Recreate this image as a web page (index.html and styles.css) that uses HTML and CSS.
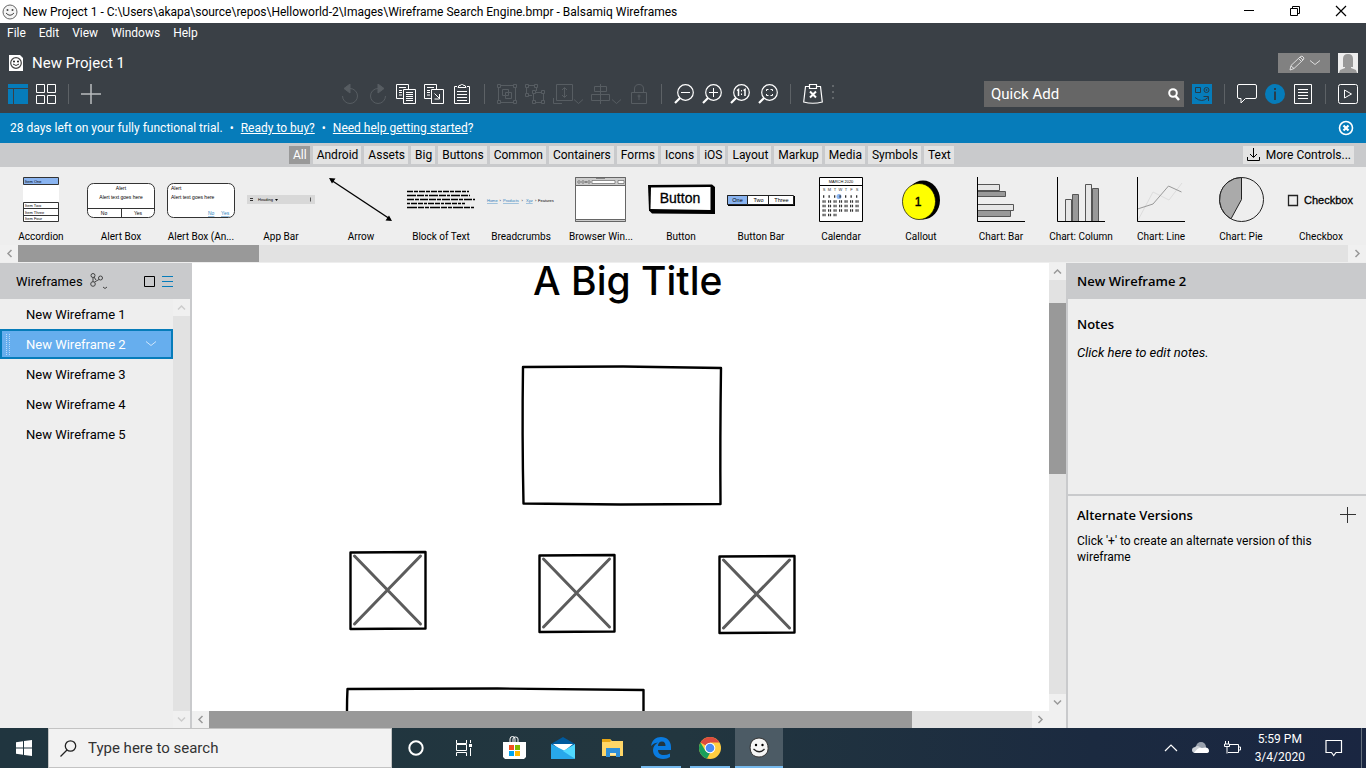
FILE: index.html
```
<!DOCTYPE html>
<html lang="en">
<head>
<meta charset="utf-8">
<title>New Project 1 - Balsamiq Wireframes</title>
<link rel="stylesheet" href="styles.css">
</head>
<body>
<svg class="defs" aria-hidden="true">
  <symbol id="mag" viewBox="0 0 20 20"><circle cx="11.500" cy="8.500" r="7.800" fill="none" stroke="currentColor" stroke-width="1.200"/><path d="M6 14L1 19" stroke="currentColor" stroke-width="2.200"/></symbol>
  <symbol id="up" viewBox="0 0 17 17"><path d="M5 10.500L8.500 7L12 10.500" fill="none" stroke="currentColor" stroke-width="1.500"/></symbol>
</svg>
<div class="app">
  <div class="titlebar">
    <svg class="app-icon" width="16" height="16" viewBox="0 0 16 16"><circle cx="8" cy="8" r="7" fill="#f4f4f4" stroke="#666"/><circle cx="5.500" cy="6" r="1" fill="#444"/><circle cx="10.500" cy="6" r="1" fill="#444"/><path d="M4 9q4 4.500 8 0" fill="none" stroke="#444"/></svg>
    <span class="window-title">New Project 1 - C:\Users\akapa\source\repos\Helloworld-2\Images\Wireframe Search Engine.bmpr - Balsamiq Wireframes</span>
    <div class="window-buttons">
      <button aria-label="Minimize"><svg width="12" height="12"><path d="M1 5.500h10" stroke="#000"/></svg></button>
      <button aria-label="Restore"><svg width="12" height="12" fill="none" stroke="#000"><path d="M1.500 3.500h7v7h-7zM3.500 3.500v-2h7v7h-2"/></svg></button>
      <button aria-label="Close"><svg width="12" height="12"><path d="M1 1l10 10M11 1L1 11" stroke="#000" stroke-width="1.200"/></svg></button>
    </div>
  </div>

  <header class="header">
    <nav class="menu">
      <button>File</button><button>Edit</button><button>View</button><button>Windows</button><button>Help</button>
    </nav>
    <div class="project">
      <svg width="15" height="16" viewBox="0 0 15 16"><path d="M0 0h11l3 3v13H0z" fill="#fff"/><circle cx="7" cy="8" r="5.300" fill="#fff" stroke="#444" stroke-width="1.200"/><circle cx="5" cy="6.500" r=".9"/><circle cx="9" cy="6.500" r=".9"/><path d="M4 9q3 3 6 0" fill="none" stroke="#333"/></svg>
      <span class="project-name">New Project 1</span>
      <button class="edit-mode" aria-label="Edit mode"><svg width="34" height="20" viewBox="0 0 34 20" fill="none" stroke="#ddd"><path d="M3 17l1-4.500L13 4l3 3-9 8.500zM11.500 5.500l3 3M4 13l3 2.500M13 4l2-1 2 2-1 2"/><path d="M23 7.500l5 4 5-4"/></svg></button>
      <svg class="avatar" width="20" height="20" viewBox="0 0 20 20"><path fill="#eee" d="M0 0h20v20H0z"/><path d="M5 14V6q0-5 5-5t5 5v8H13v1l5 2 1 3H1l1-3 5-2v-1z" fill="#999"/></svg>
    </div>
    <div class="toolbar">
      <div class="views">
        <button aria-label="Wireframe view"><svg width="20" height="20"><path fill="#067cba" d="M0 0h20v4H0zM0 5h5v15H0zM6 5h14v15H6z"/></svg></button>
        <button aria-label="Grid view"><svg width="20" height="20" fill="none" stroke="#fff"><path d="M.5.500h8v8h-8zM11.500.500h8v8h-8zM.5 11.500h8v8h-8zM11.500 11.500h8v8h-8z"/></svg></button>
        <i class="sep"></i>
        <button aria-label="Add wireframe"><svg width="20" height="20"><path d="M10 0v20M0 10h20" stroke="#b9bcbe" stroke-width="1.500"/></svg></button>
      </div>
      <div class="tools">
        <button class="off" aria-label="Undo"><svg width="20" height="20" viewBox="0 0 20 20" fill="none" stroke="currentColor"><path d="M10 4.500a7.500 7.500 0 1 1-7.500 7.500" /><path d="M10 0v9L4 4.500z" fill="currentColor"/></svg></button>
        <button class="off" aria-label="Redo"><svg width="20" height="20" viewBox="0 0 20 20" fill="none" stroke="currentColor"><path d="M10 4.500a7.500 7.500 0 1 0 7.500 7.500"/><path d="M10 0v9l6-4.500z" fill="currentColor"/></svg></button>
        <button aria-label="Copy"><svg width="20" height="20" viewBox="0 0 20 20" fill="none" stroke="currentColor"><path d="M7 14.500H.5V.500h12v5M7.500 5.500h12v14h-12zM3 3.500h7M3 6.500h3M3 8.500h3M3 11h3M10 8.500h7M10 10.500h7M10 12.500h7M10 14.500h7M10 16.500h7"/></svg></button>
        <button aria-label="Duplicate"><svg width="20" height="20" viewBox="0 0 20 20" fill="none" stroke="currentColor"><path d="M7 14.500H.5V.500h12v5M7.500 5.500h12v14h-12zM3 3.500h7M3 6.500h3M3 8.500h3M3 11h3M10.500 9.500l5 5M15.500 10v5h-5"/></svg></button>
        <button aria-label="Paste"><svg width="20" height="20" viewBox="0 0 20 20" fill="none" stroke="currentColor"><path d="M5 2.500H2.500v17h15v-17H15M6 3.500l1-2h1.500L9.500 0h1l1 1.500H13l1 2zM5 7.500h10M5 10.500h10M5 13.500h10M5 16.500h10"/></svg></button>
        <i class="sep"></i>
        <button class="off" aria-label="Group"><svg width="20" height="20" viewBox="0 0 20 20" fill="none" stroke="currentColor"><path d="M3 1.500h14M3 18.500h14M1.500 3v14M18.500 3v14M.5.500h3v3h-3zM16.500.500h3v3h-3zM.5 16.500h3v3h-3zM16.500 16.500h3v3h-3zM5.500 5.500h6v3h3v6h-6v-3h-3zM8.500 8.500h3v3h-3z"/></svg></button>
        <button class="off" aria-label="Ungroup"><svg width="20" height="20" viewBox="0 0 20 20" fill="none" stroke="currentColor"><path d="M3 1.500h7M1.500 3v7M11.500 3v4M3 11.500h4M.5.500h3v3h-3zM9.500.500h3v3h-3zM.5 9.500h3v3h-3zM7.500 6.500h3v3h-3zM16.500 6.500h3v3h-3zM7.500 16.500h3v3h-3zM16.500 16.500h3v3h-3zM10.500 8.500h6M8.500 10v6M18.500 10v6M11 18.500h5"/></svg></button>
        <button class="off" aria-label="Layering"><svg width="30" height="20" viewBox="0 0 30 20" fill="none" stroke="currentColor"><path d="M3.500.500h16v16h-16zM.5 14v5.500H9M11.500 4v9M9 6l2.500-2.500L14 6M9 11l2.500 2.500L14 11M21 15.500l4.500 4 4.500-4"/></svg></button>
        <button class="off" aria-label="Align"><svg width="30" height="20" viewBox="0 0 30 20" fill="none" stroke="currentColor"><path d="M9.500 0v20M3.500 2.500h12v5h-12zM.5 10.500h18v6H.5zM21 15.500l4.500 4 4.500-4"/></svg></button>
        <button class="off" aria-label="Lock"><svg width="20" height="20" viewBox="0 0 20 20" fill="none" stroke="currentColor"><path d="M2.500 8.500h15v11h-15zM5.500 8V5q0-4.500 4.500-4.500T14.500 5v3M10 12v4"/><circle cx="10" cy="12" r="1"/></svg></button>
        <i class="sep"></i>
        <button aria-label="Zoom out"><svg width="20" height="20"><use href="#mag"/><path d="M7 8.500h9" stroke="#fff"/></svg></button>
        <button aria-label="Zoom in"><svg width="20" height="20"><use href="#mag"/><path d="M7 8.500h9M11.500 4v9" stroke="#fff"/></svg></button>
        <button aria-label="Actual size"><svg width="20" height="20"><use href="#mag"/><path d="M7 6.500l1.500-1V12M13.500 6.500l1.500-1V12" fill="none" stroke="#fff" stroke-width="1.500"/><path d="M11 6h1v1.500h-1zM11 9.500h1V11h-1z" fill="#fff"/></svg></button>
        <button aria-label="Zoom to fit"><svg width="20" height="20"><use href="#mag"/><path d="M8.500 7V5.500h2M12.500 5.500h2V7M14.500 10v1.500h-2M10.500 11.500h-2V10" fill="none" stroke="#fff"/></svg></button>
        <i class="sep"></i>
        <button aria-label="Delete"><svg width="20" height="20" viewBox="0 0 20 20" fill="none" stroke="currentColor" stroke-width="1.200"><path d="M6 2.500H2.500L.7 18q9 2.500 18.600 0L17.500 2.500H14M6.500.500h7v4h-7z"/><path d="M7 7.500l6 6M13 7.500l-6 6" stroke-width="2"/></svg></button>
        <svg class="dots" width="4" height="20" fill="#62676b"><path d="M1 1h2v2H1zM1 7h2v2H1zM1 13h2v2H1z"/></svg>
      </div>
      <div class="actions">
        <label class="quick"><input type="text" placeholder="Quick Add" aria-label="Quick Add"><svg width="12" height="13" fill="none" stroke="#fff"><circle cx="5" cy="5" r="3.800" stroke-width="2"/><path d="M7.500 8l3.500 4" stroke-width="2.500"/></svg></label>
        <button aria-label="UI library"><svg width="20" height="20" fill="none" stroke="#263b49"><path d="M0 0h20v20H0z" fill="#067cba" stroke="none"/><path d="M3.500 3.500h5v5h-5zM3 13.500q7 6 13 0M11.500 12.500h5V17"/><circle cx="14.500" cy="6" r="2.500"/><circle cx="14.500" cy="6" r=".5"/></svg></button>
        <i class="sep"></i>
        <button aria-label="Comments"><svg width="20" height="20" fill="none" stroke="#fff"><path d="M2 .5h16q1.500 0 1.500 1.500v11q0 1.500-1.500 1.500H8.500L4 19v-4.500H2Q.5 14.500.5 13V2Q.5.500 2 .5z"/></svg></button>
        <button aria-label="Info"><svg width="20" height="20"><circle cx="10" cy="10" r="10" fill="#067cba"/><path d="M9 4h2v2H9zM9 7.500h2V16H9z" fill="#293d4c"/></svg></button>
        <button aria-label="Notes"><svg width="20" height="20" fill="none" stroke="#fff"><path d="M1.500.500h17v19h-17zM5 5.500h10M5 8.500h10M5 11.500h10M5 14.500h10"/></svg></button>
        <i class="sep"></i>
        <button aria-label="Present"><svg width="20" height="20" fill="none" stroke="#fff"><rect x=".5" y=".5" width="19" height="19" rx="2"/><path d="M6.500 6v8l7-4z"/></svg></button>
      </div>
    </div>
  </header>

  <div class="banner">
    <span>28 days left on your fully functional trial.</span><span>•</span><a href="#buy">Ready to buy?</a><span>•</span><span><a href="#help">Need help getting started</a>?</span>
    <button aria-label="Dismiss"><svg width="16" height="16" fill="none" stroke="#fff"><circle cx="8" cy="8" r="6.500" stroke-width="1.600"/><path d="M5.500 5.500l5 5M10.500 5.500l-5 5" stroke-width="2.200"/></svg></button>
  </div>

  <div class="filters">
    <div class="tags">
      <button class="on">All</button><button>Android</button><button>Assets</button><button>Big</button><button>Buttons</button><button>Common</button><button>Containers</button><button>Forms</button><button>Icons</button><button>iOS</button><button>Layout</button><button>Markup</button><button>Media</button><button>Symbols</button><button>Text</button>
    </div>
    <button class="more"><svg width="13" height="14" fill="none" stroke="#000"><path d="M6.500 0v9M3 6l3.500 3.500L10 6M.5 9v3.500h12V9"/></svg>More Controls...</button>
  </div>

  <div class="gallery">
    <figure><svg viewBox="0 0 80 56"><path fill="#fff" d="M22 5h36v45H22z"/><g stroke="#333"><path d="M22.500 5.500h35v7h-35z" fill="#8ab4f0"/><path d="M22.500 30.500h35v19h-35zM22 36.500h36M22 43.500h36" fill="#fff"/></g><g font-size="4"><text x="24" y="10.500">Item One</text><text x="24" y="35">Item Two</text><text x="24" y="41.500">Item Three</text><text x="24" y="48">Item Four</text></g></svg><figcaption>Accordion</figcaption></figure>
    <figure><svg viewBox="0 0 80 56"><rect x="6.500" y="11.500" width="67" height="34" rx="6" fill="#fff" stroke="#333"/><path d="M7 36.500h66M40.500 36v9" stroke="#333"/><g font-size="5" text-anchor="middle"><text x="40" y="18">Alert</text><text x="40" y="27">Alert text goes here</text><text x="23" y="43">No</text><text x="57" y="43">Yes</text></g></svg><figcaption>Alert Box</figcaption></figure>
    <figure><svg viewBox="0 0 80 56"><rect x="6.500" y="11.500" width="67" height="34" rx="6" fill="#fff" stroke="#333"/><g font-size="5"><text x="10" y="18">Alert</text><text x="10" y="27">Alert text goes here</text><g fill="#2d7fbd" text-decoration="underline"><text x="47" y="43">No</text><text x="60" y="43">Yes</text></g></g></svg><figcaption>Alert Box (An...</figcaption></figure>
    <figure><svg viewBox="0 0 80 56"><path d="M6 23h68v9H6z" fill="#d8d8d8"/><path d="M9 26.500h3M9 28.500h3" stroke="#333"/><text x="17" y="29" font-size="4">Heading</text><path d="M34 27h3l-1.500 2z"/><path d="M69 25.500h1v4h-1z" fill="#555"/></svg><figcaption>App Bar</figcaption></figure>
    <figure><svg viewBox="0 0 80 56"><path d="M10 8l59 39" stroke="#000" stroke-width="1.400"/><path d="M8 6l6.500.500-3.500 5zM71 49l-6.500-.500 3.500-5z"/></svg><figcaption>Arrow</figcaption></figure>
    <figure><svg viewBox="0 0 80 56" stroke="#000" stroke-width="1.300"><path d="M6 19.500h62" stroke-dasharray="6 1 4 1"/><path d="M6 23.500h63" stroke-dasharray="9 1 7 1 3 1"/><path d="M6 27.500h68" stroke-dasharray="7 1 4 1 8 1"/><path d="M6 31.500h58" stroke-dasharray="3 1 6 1 5 1"/><path d="M6 35.500h67" stroke-dasharray="10 1 6 1 4 1"/></svg><figcaption>Block of Text</figcaption></figure>
    <figure><svg viewBox="0 0 80 56" font-size="4"><g fill="#2d7fbd" text-decoration="underline"><text x="6" y="30">Home</text><text x="22" y="30">Products</text><text x="45" y="30">Xyz</text></g><text x="18.500" y="30">›</text><text x="40.500" y="30">›</text><text x="54" y="30">›</text><text x="57" y="30">Features</text></svg><figcaption>Breadcrumbs</figcaption></figure>
    <figure><svg viewBox="0 0 80 56" stroke="#666"><path d="M14.500 5.500h50v44h-50z" fill="#fff"/><path d="M14.500 5.500h50v8h-50zM14.500 47.500h50v2h-50z" fill="#ccc"/><path d="M31 8.500h23v3H31zM57 8.500h6v3h-6z" fill="#fff" stroke-width=".7"/><g fill="none" stroke-width=".7"><circle cx="18" cy="10" r="1.300"/><circle cx="22" cy="10" r="1.300"/><circle cx="28" cy="10" r="1.300"/><path d="M24 9l2 2M26 9l-2 2M35 6.500h9"/></g></svg><figcaption>Browser Win...</figcaption></figure>
    <figure><svg viewBox="0 0 80 56"><path d="M7 13l64-.500 3 2.500V42l-63-.500-3-3z"/><path d="M10 15.500l59.500-.500V38L9.500 37z" fill="#fff"/><text x="39" y="31" font-size="14" text-anchor="middle" stroke="#000" stroke-width=".3">Button</text></svg><figcaption>Button</figcaption></figure>
    <figure><svg viewBox="0 0 80 56"><path d="M7 24h67v10H7z"/><path d="M6.500 23.500h66v9h-66z" fill="#fff" stroke="#222"/><path d="M6.500 23.500h20v9h-20z" fill="#8ab4f0" stroke="#222"/><path d="M47.500 23v9" stroke="#222"/><g font-size="5.500" text-anchor="middle"><text x="16.500" y="30">One</text><text x="37.500" y="30">Two</text><text x="60.500" y="30">Three</text></g></svg><figcaption>Button Bar</figcaption></figure>
    <figure><svg viewBox="0 0 80 56"><path d="M18.500 5.500h43v44h-43z" fill="#fff" stroke="#000"/><path d="M18 13.500h44" stroke="#000"/><circle cx="38" cy="24.500" r="2.500" fill="#8ab4f0"/><g font-size="4" text-anchor="middle"><text x="40" y="11">MARCH 2020</text><g fill="#333"><text x="23" y="19">S</text><text x="28.500" y="19">M</text><text x="34" y="19">T</text><text x="39.500" y="19">W</text><text x="45" y="19">T</text><text x="50.500" y="19">F</text><text x="56" y="19">S</text></g></g><g stroke="#333" stroke-width="2.400"><path d="M22 24.500h37" stroke-dasharray="1.300 4.200"/><path d="M21.500 29.500h37M21.500 34h37M21.500 38.500h37M21.500 43h14" stroke-dasharray="1.200 .7 1.200 2.400"/></g></svg><figcaption>Calendar</figcaption></figure>
    <figure><svg viewBox="0 0 80 56"><ellipse cx="42" cy="28" rx="17" ry="19.500"/><ellipse cx="38" cy="29.500" rx="16.500" ry="18" fill="#ff0" stroke="#000" stroke-width=".7"/><text x="37" y="34" font-size="12" text-anchor="middle" stroke="#000" stroke-width=".4">1</text></svg><figcaption>Callout</figcaption></figure>
    <figure><svg viewBox="0 0 80 56" fill="#e6e6e6" stroke="#555"><path d="M16.500 12.500h22v6h-22zM16.500 32.500h36v6h-36z"/><path d="M16.500 19.500h28v5h-28zM16.500 38.500h33v6h-33z" fill="#999"/><path d="M16.500 5v44.500H64" fill="none" stroke="#000"/></svg><figcaption>Chart: Bar</figcaption></figure>
    <figure><svg viewBox="0 0 80 56" fill="#e6e6e6" stroke="#555"><path d="M24.500 27.500h6v22h-6zM44.500 12.500h6v37h-6z"/><path d="M31.500 22.500h6v27h-6zM51.500 16.500h6v33h-6z" fill="#999"/><path d="M16.500 5v44.500H64" fill="none" stroke="#000"/></svg><figcaption>Chart: Column</figcaption></figure>
    <figure><svg viewBox="0 0 80 56" fill="none"><path d="M16.500 49L32 20l16 8 13-17" stroke="#ddd"/><path d="M16.500 37L32 32l15.500-18 13 6" stroke="#999"/><path d="M16.500 5v44.500H64" stroke="#000"/></svg><figcaption>Chart: Line</figcaption></figure>
    <figure><svg viewBox="0 0 80 56" stroke="#222"><circle cx="40.500" cy="27.500" r="22" fill="#eee"/><path d="M40.500 27.500v-22A22 22 0 0 0 30 46.800z" fill="#aaa"/></svg><figcaption>Chart: Pie</figcaption></figure>
    <figure><svg viewBox="0 0 80 56"><path d="M7.500 23.500h9v10h-9z" fill="none" stroke="#222" stroke-width="1.300"/><text x="23" y="32" font-size="11" stroke="#000" stroke-width=".3">Checkbox</text></svg><figcaption>Checkbox</figcaption></figure>
  </div>
  <div class="bar h gallery-bar"><button aria-label="Scroll left"><svg class="left" width="17" height="17"><use href="#up"/></svg></button><i class="thumb"></i><span class="track"></span><button aria-label="Scroll right"><svg class="right" width="17" height="17"><use href="#up"/></svg></button></div>

  <main class="work">
    <aside class="navigator">
      <div class="panel-head">
        <span>Wireframes</span>
        <svg width="17" height="18" fill="none" stroke="#444"><circle cx="3" cy="3.500" r="2"/><circle cx="3" cy="12" r="2.300"/><circle cx="10.500" cy="6" r="2"/><path d="M3 5.500v4.500M4.500 10l4.500-2.500M4 5l2 3M13 15l2 1.500 2-1.500"/></svg>
        <button class="thumbs" aria-label="Thumbnails"><svg width="11" height="11"><path d="M.5.500h10v10H.5z" fill="none" stroke="#000"/></svg></button>
        <button aria-label="List"><svg width="11" height="11"><path d="M0 .5h11M0 5.500h11M0 10.500h11" stroke="#067cba"/></svg></button>
      </div>
      <div class="nav-body">
        <ul>
          <li><button>New Wireframe 1</button></li>
          <li class="selected"><button><svg width="4" height="21"><path d="M.5 0v21M3.500 0v21" stroke="#b7dafa" stroke-dasharray="1 1"/></svg>New Wireframe 2<svg class="chev" width="10" height="6"><path d="M0 .5l5 4 5-4" fill="none" stroke="#cfe5fb"/></svg></button></li>
          <li><button>New Wireframe 3</button></li>
          <li><button>New Wireframe 4</button></li>
          <li><button>New Wireframe 5</button></li>
        </ul>
        <div class="bar v faint"><button aria-label="Scroll up"><svg width="17" height="17"><use href="#up"/></svg></button><span class="track"></span><button aria-label="Scroll down"><svg class="down" width="17" height="17"><use href="#up"/></svg></button></div>
      </div>
    </aside>

    <section class="canvas-area">
      <div class="canvas">
        <h1>A Big Title</h1>
        <svg class="sheet" fill="none" stroke="#000" stroke-width="2.400" stroke-linejoin="round" stroke-linecap="round">
          <path d="M331 104l100-.500 98 1.500q-1 70-.500 136l-100 .500-97-1q-1.500-70-.500-136.500z"/>
          <path d="M155.500 470q-1-25 0-44l150-.500 146 1.500v43"/>
          <g id="ph"><path d="M158.500 289.500l75-.500V365.500l-75 .500z"/><path d="M162.500 293l66 68M228.500 293l-66 68" stroke="#5c5c5c" stroke-width="3"/></g>
          <use href="#ph" x="189" y="3"/><use href="#ph" x="369" y="4"/>
        </svg>
      </div>
      <div class="bar v canvas-v"><button aria-label="Scroll up"><svg width="17" height="17"><use href="#up"/></svg></button><span class="lead"></span><i class="thumb"></i><span class="track"></span><button aria-label="Scroll down"><svg class="down" width="17" height="17"><use href="#up"/></svg></button></div>
      <div class="bar h canvas-h"><button aria-label="Scroll left"><svg class="left" width="17" height="17"><use href="#up"/></svg></button><i class="thumb"></i><span class="track"></span><button aria-label="Scroll right"><svg class="right" width="17" height="17"><use href="#up"/></svg></button></div>
    </section>

    <aside class="inspector">
      <h2 class="panel-head">New Wireframe 2</h2>
      <section class="notes"><h3>Notes</h3><p><em>Click here to edit notes.</em></p></section>
      <section class="versions"><div class="versions-head"><h3>Alternate Versions</h3><button aria-label="Add version"><svg width="16" height="16"><path d="M7.500 0v16M0 7.500h16" stroke="#333"/></svg></button></div><p>Click '+' to create an alternate version of this wireframe</p></section>
    </aside>
  </main>

  <footer class="taskbar">
    <button class="start" aria-label="Start"><svg width="16" height="16" fill="#fff"><path d="M0 2.300L7 1.300V7.500H0zM8 1.100L16 0v7.500H8zM0 8.500h7v6.200L0 13.700zM8 8.500h8V16L8 14.900z"/></svg></button>
    <label class="search"><svg width="17" height="17" fill="none" stroke="#222" stroke-width="1.300"><circle cx="10.500" cy="6" r="5.200"/><path d="M7 10L.5 16.500"/></svg><input type="text" placeholder="Type here to search" aria-label="Search"></label>
    <div class="apps">
      <button aria-label="Cortana"><svg width="24" height="24"><circle cx="12" cy="12" r="6.700" fill="none" stroke="#fff" stroke-width="2"/></svg></button>
      <button aria-label="Task view"><svg width="24" height="24" fill="none" stroke="#fff"><path d="M3.500 4v3.500h10V4M3.500 20v-3.500h10V20M3.500 8.500h10v6h-10zM17.500 4v3M17.500 12v8"/><path d="M16 8h3v3h-3z" fill="#fff" stroke="none"/></svg></button>
      <button aria-label="Store"><svg width="24" height="24"><path d="M8 6V3q0-2.500 2.500-2.500T13 3v3M11 6V3q0-2 2.500-2T16 3v3" fill="none" stroke="#fff"/><path d="M1 6h23v15l-2 2H3l-2-2z" fill="#fff"/><path d="M7 9h5v5H7z" fill="#f25022"/><path d="M13 9h5v5h-5z" fill="#7fba00"/><path d="M7 15h5v5H7z" fill="#00a4ef"/><path d="M13 15h5v5h-5z" fill="#ffb900"/></svg></button>
      <button aria-label="Mail"><svg width="24" height="24"><path d="M0 8l12-7 12 7v5H0z" fill="#005a9e"/><path d="M2 8h20L12 16z" fill="#fff"/><path d="M0 8l14 7 10 8H0z" fill="#28a8ea"/><path d="M24 8L12 15l12 8z" fill="#50d9ff"/></svg></button>
      <button aria-label="File Explorer"><svg width="24" height="24"><path d="M2 3h8l2 2h11v15H2z" fill="#ffd667"/><path d="M2 3h8l1 2-1 1H2z" fill="#e7a614"/><path d="M6 12h14v9h-4v-4h-6v4H6z" fill="#2f8fd8"/><path d="M10 17h6v2h-6z" fill="#ffe9a8"/></svg></button>
      <button class="running" aria-label="Edge"><svg width="24" height="24" viewBox="0 0 24 24"><path d="M2 10C3 4 7 1 12 1c6 0 10 4 10 10v3H9c0 3 2 5 6 5 2 0 4-.500 6-1.500V21c-2 1.300-4 2-7 2-6 0-10-3.500-10-9 0-3 2-6 5-7.500-3 .300-5 1.500-7 3.500zM9 10h7.500c0-3-1-4.500-3.500-4.500S9 7.500 9 10z" fill="#0a7be0"/></svg></button>
      <button class="running" aria-label="Chrome"><svg width="24" height="24" viewBox="0 0 24 24"><circle cx="12" cy="12" r="11" fill="#ffcd40"/><path d="M12 12L2.500 6.500A11 11 0 0 1 21.500 6.500H12z" fill="#dd4b3e"/><path d="M2.500 6.500L7.500 15l4.500 2-3 5.600A11 11 0 0 1 2.500 6.500z" fill="#1a9f5b"/><circle cx="12" cy="12" r="5.300" fill="#fff"/><circle cx="12" cy="12" r="4.300" fill="#4a8af4"/></svg></button>
      <button class="running active" aria-label="Balsamiq"><svg width="24" height="24"><path d="M6 4Q12 0 18 4q4.500 5 2.500 12-3 5-8.500 5-6.500 0-8.500-6Q2 8 6 4z" fill="#f5f5f5" stroke="#333"/><circle cx="9" cy="9" r="1.200"/><circle cx="15.500" cy="9" r="1.200"/><path d="M6.500 13q6 5.500 11 0" fill="none" stroke="#222" stroke-width="1.300"/></svg></button>
    </div>
    <div class="tray">
      <button aria-label="Hidden icons"><svg width="14" height="8"><path d="M1 7l6-6 6 6" fill="none" stroke="#fff" stroke-width="1.200"/></svg></button>
      <button aria-label="OneDrive"><svg width="18" height="12"><circle cx="9" cy="5" r="5" fill="#9aa2ae"/><path d="M3 5q2-2 5 0l3 3-3 3H3q-3-.500-3-3t3-3z" fill="#ccd0d6"/><path d="M2 11q4-6 8-5 7-2 7 3 0 2-3 2z" fill="#fff"/></svg></button>
      <button aria-label="Battery"><svg width="17" height="14" fill="none" stroke="#fff"><path d="M6 3.500h8.500v8H4M15 6h1.500v3H15M1.500 0v3M4.500 0v3M.5 3v2.500h5V3zM3 5.500v7"/></svg></button>
      <div class="clock"><time>5:59 PM</time><time>3/4/2020</time></div>
      <button class="notify" aria-label="Notifications"><svg width="18" height="17" fill="none" stroke="#fff"><path d="M1 .5h15.500v12H11L8.700 15.500 6.500 12.500H1z" stroke-width="1.200"/></svg></button>
      <i class="desktop"></i>
    </div>
  </footer>
</div>
</body>
</html>
```

FILE: styles.css
```
* { box-sizing: border-box; margin: 0; padding: 0; }
body { font-family: Roboto, "Open Sans", sans-serif; font-size: 12px; color: #000; }
button { border: 0; background: none; font: inherit; color: inherit; display: flex; align-items: center; justify-content: center; flex: none; white-space: nowrap; }
svg { display: block; flex: none; }
input { border: 0; background: none; font: inherit; color: inherit; flex: 1; min-width: 0; outline: none; }
a { color: inherit; }
.defs { position: absolute; width: 0; height: 0; }

.app { height: 100vh; display: flex; flex-direction: column; overflow: hidden; background: #eee; }

.titlebar { height: 23px; flex: none; background: #fff; display: flex; align-items: center; padding: 0 2px; gap: 5px; white-space: nowrap; }
.window-buttons { display: flex; margin-left: auto; margin-bottom: 2px; }
.window-buttons button { width: 46px; height: 20px; }

.header { background: #3a4046; color: #fff; flex: none; }
.menu { display: flex; height: 20px; padding: 0 7px; gap: 13px; align-items: center; }
.project { display: flex; align-items: center; height: 38px; padding: 2px 8px 0 9px; gap: 8px; }
.project-name { font-size: 15px; }
.edit-mode { width: 52px; height: 20px; background: #818181; margin-left: auto; }
.toolbar { display: flex; align-items: center; height: 32px; padding: 0 8px 6px; }
.toolbar .sep { width: 1px; height: 20px; background: #5d6266; margin: 0 4px; }
.views, .tools, .actions { display: flex; align-items: center; gap: 8px; }
.views { flex: 0 0 332px; }
.off { color: #575d62; }
.actions { margin-left: auto; }
.quick { display: flex; align-items: center; width: 200px; height: 26px; background: #666; padding: 0 4px 0 7px; font-size: 15px; }
.quick input::placeholder { color: #fff; opacity: 1; }

.banner { display: flex; align-items: center; height: 30px; flex: none; background: #067cba; color: #fff; padding: 0 12px 0 10px; gap: 7px; }
.banner button { margin-left: auto; }

.filters { display: flex; align-items: center; height: 24px; flex: none; background: #c9cacc; padding-right: 12px; }
.tags { flex: 1; display: flex; justify-content: center; gap: 3px; }
.filters button { height: 18px; background: #e3e3e3; padding: 0 3px 0 4px; }
.filters .on { background: #999; color: #fff; }
.filters .more { gap: 6px; }

.gallery { display: flex; height: 78px; flex: none; padding-left: 1px; overflow: hidden; }
.gallery figure { width: 80px; flex: none; padding-top: 5px; text-align: center; }
.gallery figure svg { width: 80px; height: 56px; font-family: "Liberation Sans", sans-serif; }
.gallery figcaption { font-size: 10px; line-height: 18px; white-space: nowrap; }

.bar { display: flex; background: #e2e2e2; color: #999; flex: none; }
.bar.h { height: 17px; }
.bar.v { width: 17px; flex-direction: column; }
.bar button { width: 17px; height: 17px; background: #f0f0f0; }
.bar .thumb { background: #999; }
.bar .track { flex: 1; }
.left { transform: rotate(-90deg); }
.right { transform: rotate(90deg); }
.down { transform: rotate(180deg); }
.faint { color: #ccc; }
.gallery-bar { margin-bottom: 1px; }
.gallery-bar button { width: 18px; }
.gallery-bar .thumb { flex: 0 0 241px; }

.work { flex: 1; min-height: 0; display: flex; }
.panel-head { height: 36px; flex: none; background: #c9cacc; display: flex; align-items: center; }
.navigator { flex: 0 0 192px; display: flex; flex-direction: column; border-right: 2px solid #c9cacc; font-size: 13px; }
.navigator .panel-head { padding: 0 17px 0 16px; gap: 7px; }
.navigator .thumbs { margin-left: auto; }
.nav-body { flex: 1; min-height: 0; display: flex; }
.nav-body ul { flex: 1; list-style: none; }
.nav-body li { height: 30px; display: flex; padding: 0 24px; border: 2px solid transparent; }
.nav-body li.selected { border-color: #067cba; background: #66aeee; color: #fff; padding: 0 15px 0 4px; }
.nav-body .selected button { gap: 16px; width: 100%; justify-content: flex-start; }
.nav-body .chev { margin-left: auto; }

.canvas-area { flex: 1; min-width: 0; background: #f0f0f0; display: grid; grid-template: 1fr 17px / 1fr 17px; }
.canvas { position: relative; min-width: 0; min-height: 0; background: #fff; }
.canvas h1 { position: absolute; left: 341px; top: 0; font: 500 39px/36px Inter, sans-serif; white-space: nowrap; }
.sheet { position: absolute; left: 0; top: 0; width: 100%; height: 100%; overflow: hidden; }
.canvas-v { min-height: 0; }
.canvas-v .lead { height: 23px; }
.canvas-v .thumb { flex: 0 0 171px; }
.canvas-h { grid-column: 1; }
.canvas-h .thumb { flex: 0 0 82%; }

.inspector { flex: 0 0 300px; border-left: 2px solid #c9cacc; display: flex; flex-direction: column; }
.inspector h2, .inspector h3 { font: 600 13px/18px "Open Sans", sans-serif; }
.inspector h2 { padding: 0 9px; }
.inspector p { line-height: 16px; }
.notes, .versions { padding: 16px 9px; min-height: 0; }
.notes { flex: 163; border-bottom: 2px solid #c9cacc; }
.notes p { margin-top: 12px; font-size: 13px; }
.versions { flex: 206; padding-top: 10px; padding-right: 10px; }
.versions-head { display: flex; justify-content: space-between; align-items: center; }
.versions p { margin-top: 9px; max-width: 260px; }

.taskbar { height: 40px; flex: none; display: flex; background: linear-gradient(90deg, #20353f 0%, #22363f 50%, #1b2a40 80%, #1a2641 100%); color: #fff; }
.start { width: 48px; }
.search { width: 344px; display: flex; align-items: center; gap: 11px; padding: 0 11px; background: #f2f2f2; border: 1px solid #c3c3c3; color: #333; font-size: 15px; }
.search input::placeholder { color: #333; opacity: 1; }
.apps { display: flex; gap: 1px; }
.apps button { width: 48px; height: 40px; border-bottom: 2px solid transparent; border-top: 2px solid transparent; }
.apps .running { border-bottom-color: #76b9ed; width: 40px; margin: 0 4px; }
.apps .active { width: 48px; margin: 0; background: #4c5b65; border-top-color: #4c5b65; }
.tray { display: flex; align-items: center; margin-left: auto; gap: 14px; }
.clock { display: flex; flex-direction: column; align-items: center; font-size: 12px; line-height: 18px; }
.notify { margin: 0 4px 0 6px; }
.desktop { width: 1px; height: 40px; background: #65707d; margin-right: 4px; }
```
